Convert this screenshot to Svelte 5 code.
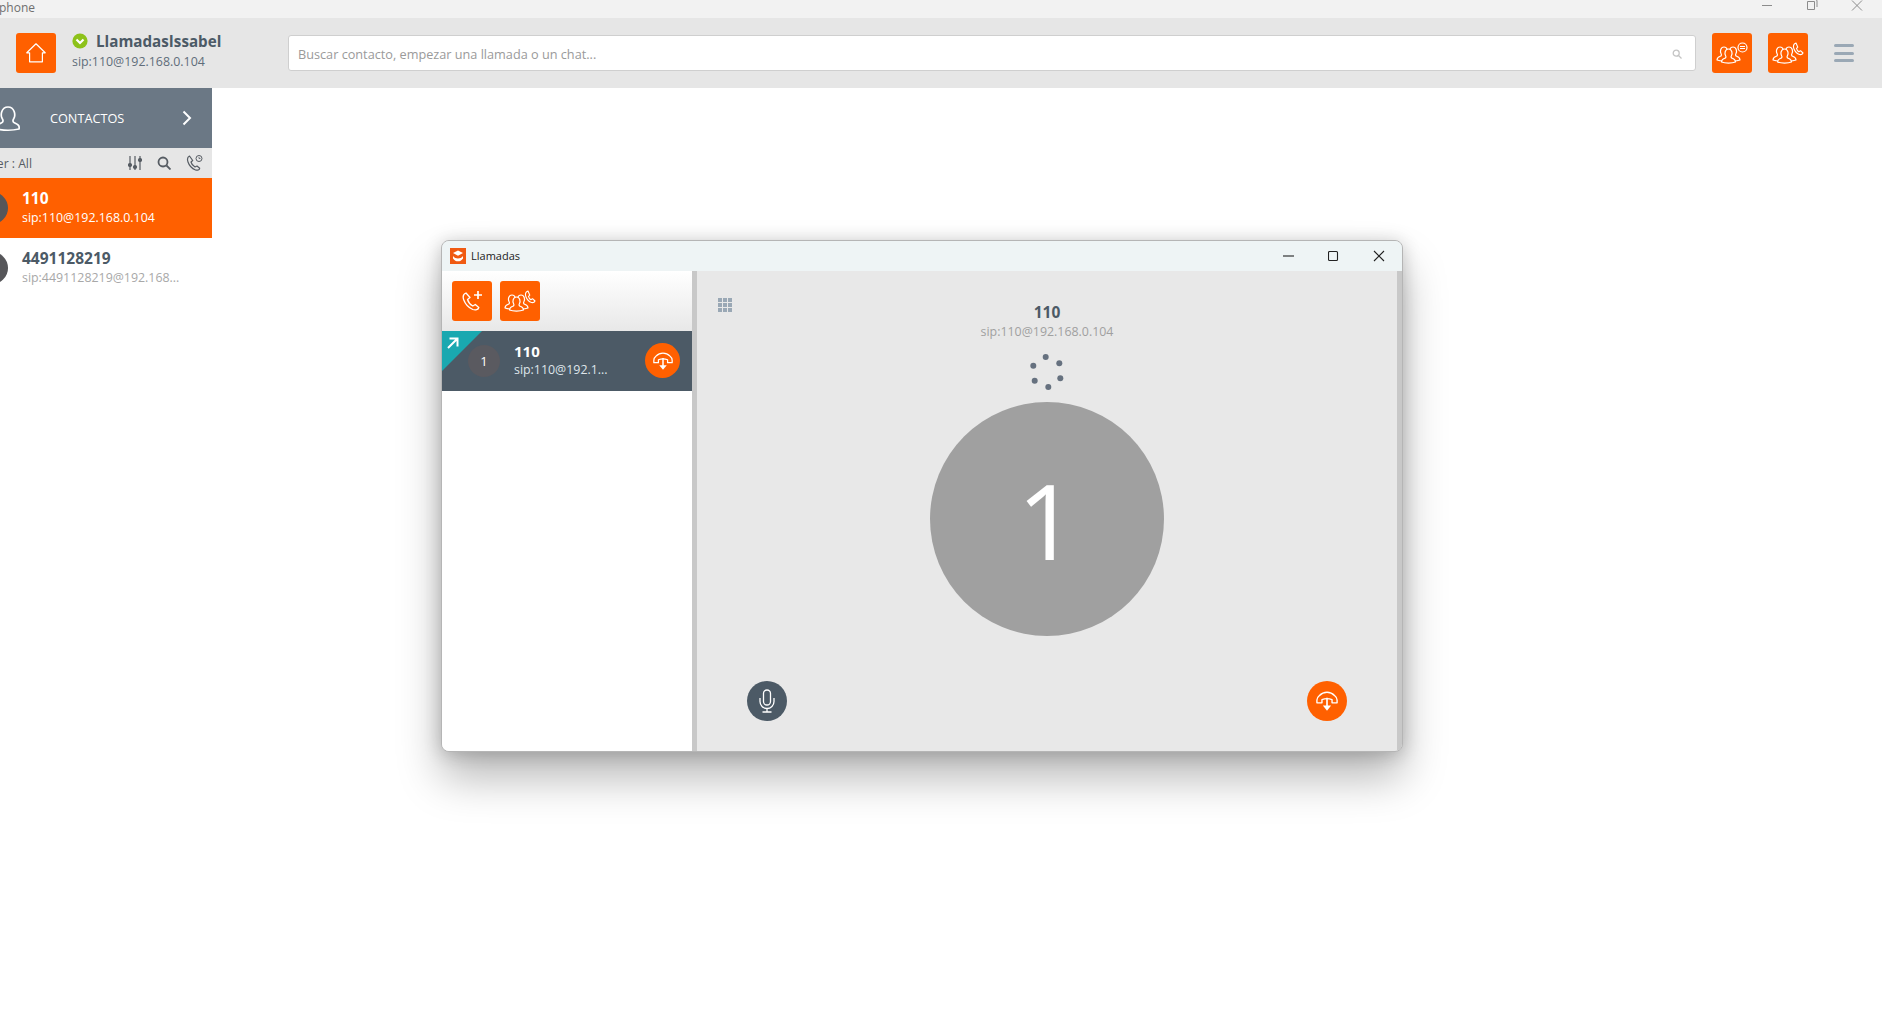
<script>
  const dots = [[8.7,3],[22.3,9.3],[23.3,24.3],[11.3,33],[-2.3,26.7],[-3.7,11.7]];
  const person = "M0 13c0-2.500 1.500-3 3.500-3.800 1-.4 1.200-1.500.6-2.500C2.800 4.500 3.500 0 7 0s4.200 4.500 2.900 6.700c-.6 1-.4 2.100.6 2.500 2 .8 3.500 1.300 3.500 3.800-3.500 1.400-10.500 1.400-14 0z";
</script>

{#snippet people()}
  <g fill="#ff6000" stroke="#fff" stroke-width="1.200" stroke-linejoin="round">
    <path d={person} transform="translate(5 14)"/>
    <path d={person} transform="translate(14 14)"/>
    <path d={person} transform="translate(9.500 16)"/>
  </g>
{/snippet}

{#snippet groupCall()}
  <svg width="40" height="40" viewBox="0 0 40 40">
    {@render people()}
    <path d="M28 10c-2.500 1-3 3.500-2 6s3 4.700 5.500 5.500c1.500.3 3-.3 3.500-1.500l-2.500-2.300-1.700 1c-1-.7-2-2-2.300-3.300l1.300-1.200z" fill="none" stroke="#fff" stroke-width="1.100" stroke-linejoin="round"/>
  </svg>
{/snippet}

{#snippet handset()}
  <g fill="none" stroke="#fff" stroke-width="1.500" stroke-linejoin="round">
    <path d="M1 11c0-2 .8-3.500 2.500-4.800 5-5 12-5 17 0 1.700 1.300 2.500 2.800 2.500 4.800v3h-5.500v-3.500c-3.500-1.400-7.500-1.400-11 0V14H1z"/>
    <path d="M12 8.500V19" stroke-width="1.800"/>
    <path d="M7.500 17l4.500 5.500 4.500-5.500z" fill="#fff" stroke="none"/>
  </g>
{/snippet}

<div class="app">
  <div class="os-bar">
    <span class="os-title">phone</span>
    <div class="os-controls">
      <svg width="12" height="12" viewBox="0 0 12 12"><path d="M1 5.500h10" stroke="#8c8c8c" fill="none"/></svg>
      <svg width="12" height="12" viewBox="0 0 12 12"><path d="M1.500 1.500h7v8h-7zM3.500-.5h6a1.500 1.500 0 0 1 1.500 1.500v6" stroke="#8c8c8c" fill="none"/></svg>
      <svg width="12" height="12" viewBox="0 0 12 12"><path d="M1 .5l10 10M11 .5l-10 10" stroke="#8c8c8c" fill="none"/></svg>
    </div>
  </div>

  <header class="top">
    <button class="tile home" aria-label="Inicio">
      <svg width="20" height="20" viewBox="0 0 20 20" fill="none" stroke="#fff" stroke-width="1.200"><path d="M10 .8L.8 9.800h2.800v9h12.800v-9h2.800z" stroke-linejoin="round"/></svg>
    </button>
    <div class="me">
      <div class="me-name">
        <svg width="16" height="16" viewBox="0 0 16 16"><circle cx="8" cy="8" r="7.600" fill="#8dc21a"/><path d="M4.500 6.500L8 10l3.500-3.500" stroke="#fff" stroke-width="2.200" fill="none"/></svg>
        <strong>LlamadasIssabel</strong>
      </div>
      <div class="me-sip">sip:110@192.168.0.104</div>
    </div>
    <div class="search">
      <span>Buscar contacto, empezar una llamada o un chat...</span>
      <svg width="10" height="10" viewBox="0 0 10 10" fill="none" stroke="#c4c4c4" stroke-width="1.300"><circle cx="4.200" cy="4.200" r="3"/><path d="M6.500 6.500L9.500 9.500"/></svg>
    </div>
    <button class="tile" aria-label="Chat de grupo">
      <svg width="40" height="40" viewBox="0 0 40 40">
        {@render people()}
        <circle cx="30.500" cy="14.500" r="4.500" fill="none" stroke="#fff" stroke-width="1.200"/>
        <path d="M28 13.500h5M28 15.500h5" stroke="#fff"/>
      </svg>
    </button>
    <button class="tile" aria-label="Llamada de grupo">{@render groupCall()}</button>
    <button class="menu" aria-label="Menú"><i></i><i></i><i></i></button>
  </header>

  <main class="body">
    <aside class="side">
      <div class="side-head">
        <svg class="contact" width="24" height="26" viewBox="0 0 24 26" fill="none" stroke="#fff" stroke-width="1.700"><path d="M1 24c-1-4 2-5 5-6.500 1.500-.8 1.200-2.500.2-4-1.900-3.200-1-11.500 5.800-11.500s7.700 8.300 5.800 11.500c-1 1.500-1.300 3.200.2 4 3 1.500 6 2.500 5 6.500-6 1.500-16 1.500-22 0z" stroke-linejoin="round"/></svg>
        <span class="side-title">CONTACTOS</span>
        <svg width="10" height="16" viewBox="0 0 10 16" fill="none" stroke="#fff" stroke-width="2"><path d="M1.500 1.500L8 8l-6.500 6.500"/></svg>
      </div>
      <div class="filter">
        <span class="filter-label">Filter : All</span>
        <svg width="14" height="14" viewBox="0 0 14 14" fill="#565c63" stroke="#565c63" stroke-width="1.200"><path d="M2 0v14M7 0v14M12 0v14" fill="none"/><circle cx="2" cy="9" r="1.500"/><circle cx="7" cy="11" r="1.500"/><circle cx="12" cy="4" r="1.500"/></svg>
        <svg width="14" height="14" viewBox="0 0 14 14" fill="none" stroke="#565c63" stroke-width="1.800"><circle cx="6" cy="6" r="4.500"/><path d="M9.500 9.500L13.500 13.500"/></svg>
        <svg width="17" height="16" viewBox="0 0 17 16" fill="none" stroke="#565c63" stroke-width="1.200"><path d="M3.500 1C1.500 2 1 4 2 7c1 3 4 6.500 7.500 8 2 .5 4 0 4.200-1.800L11 11l-2 1c-2-1-3.500-3-4-5l1.700-1.500z" stroke-linejoin="round"/><circle cx="13" cy="3.500" r="3" stroke-width="1"/><path d="M13 2v1.500h1.500" stroke-width=".8"/></svg>
      </div>
      <div class="contact-row active">
        <span class="c-avatar"></span>
        <div class="c-text"><strong>110</strong><span>sip:110@192.168.0.104</span></div>
      </div>
      <div class="contact-row">
        <span class="c-avatar"></span>
        <div class="c-text"><strong>4491128219</strong><span>sip:4491128219@192.168...</span></div>
      </div>
    </aside>
  </main>

  <section class="window">
    <div class="win-title">
      <svg class="logo" width="16" height="16" viewBox="0 0 16 16"><rect width="16" height="16" fill="#f05a12"/><path d="M8 2.500l5 2.500-5 2.700L3 5z" fill="#fff"/><path d="M3 8c1.500 1.800 3 2.500 5 2.500s3.500-.7 5-2.500v2.500c-1.500 2-3 2.800-5 2.800s-3.500-.8-5-2.800z" fill="#fff"/></svg>
      <span class="win-name">Llamadas</span>
      <div class="win-controls">
        <svg width="12" height="12" viewBox="0 0 12 12"><path d="M0 6h11" stroke="#222" fill="none" stroke-width="1.100"/></svg>
        <svg width="12" height="12" viewBox="0 0 12 12"><rect x=".5" y="1.500" width="9" height="9" rx="1" stroke="#222" fill="none" stroke-width="1.100"/></svg>
        <svg width="12" height="12" viewBox="0 0 12 12"><path d="M1 1l10 10M11 1L1 11" stroke="#222" fill="none" stroke-width="1.100"/></svg>
      </div>
    </div>
    <div class="win-body">
      <div class="calls">
        <div class="calls-tools">
          <button class="tile" aria-label="Nueva llamada">
            <svg width="22" height="22" viewBox="0 0 22 22" fill="none" stroke="#fff" stroke-width="1.300"><path d="M5 3C2.500 4 1.500 6.500 2.800 10c1.500 4 5 7.800 9 9.500 2.700 1 5.500.3 6-2l-3.500-3-2.500 1.500c-2.500-1.300-4.500-3.800-5.300-6.500L9 7.500z" stroke-linejoin="round"/><path d="M17 1v8M13 5h8" stroke-width="1.700"/></svg>
          </button>
          <button class="tile" aria-label="Llamada de grupo">{@render groupCall()}</button>
        </div>
        <div class="call-item">
          <span class="corner">
            <svg width="12" height="12" viewBox="0 0 12 12" fill="none" stroke="#fff" stroke-width="2"><path d="M1 11L10.500 1.500M2.500 1.500h8v8"/></svg>
          </span>
          <span class="call-avatar">1</span>
          <div class="call-text"><strong>110</strong><span>sip:110@192.1...</span></div>
          <button class="round orange small" aria-label="Colgar">
            <svg width="20" height="20" viewBox="0 0 24 24">{@render handset()}</svg>
          </button>
        </div>
      </div>
      <div class="stage">
        <div class="stage-top">
          <svg class="keypad" width="14" height="14" viewBox="0 0 14 14" fill="#9aa8b5">
            <rect width="4" height="4"/><rect x="5" width="4" height="4"/><rect x="10" width="4" height="4"/>
            <rect y="5" width="4" height="4"/><rect x="5" y="5" width="4" height="4"/><rect x="10" y="5" width="4" height="4"/>
            <rect y="10" width="4" height="4"/><rect x="5" y="10" width="4" height="4"/><rect x="10" y="10" width="4" height="4"/>
          </svg>
          <div class="peer">
            <strong>110</strong>
            <span>sip:110@192.168.0.104</span>
          </div>
        </div>
        <svg class="spinner" width="36" height="36" viewBox="-8 0 36 36" fill="#66717f">
          {#each dots as [x, y]}<circle cx={x} cy={y} r="3"/>{/each}
        </svg>
        <div class="big-avatar">1</div>
        <div class="stage-actions">
          <button class="round slate" aria-label="Micrófono">
            <svg width="18" height="26" viewBox="0 0 18 24" fill="none" stroke="#fff" stroke-width="1.300"><rect x="5.500" y="1" width="7" height="15" rx="3.500"/><path d="M2 9v3.500a7 7 0 0 0 14 0V9M9 19.500V23M4.500 23h9"/></svg>
          </button>
          <button class="round orange" aria-label="Colgar">
            <svg width="22" height="22" viewBox="0 0 24 24">{@render handset()}</svg>
          </button>
        </div>
      </div>
      <div class="rail"></div>
    </div>
  </section>
</div>

<style>
  :global(body) { margin: 0; background: #fff; font-family: "Open Sans", "Noto Sans", sans-serif; overflow: hidden; }
  button { border: 0; padding: 0; cursor: pointer; font: inherit; }
  svg { display: block; flex: none; }
  .app { position: relative; width: 1882px; height: 1027px; overflow: hidden; background: #fff; color: #4c5a66; }

  .os-bar { height: 18px; background: #f2f2f2; display: flex; justify-content: space-between; overflow: hidden; }
  .os-title { margin-left: -1px; font-size: 12px; line-height: 15px; color: #6f6f6f; }
  .os-controls { display: flex; gap: 33px; margin-right: 19px; }

  .top { height: 70px; background: #e6e6e6; display: flex; align-items: center; padding: 0 28px 0 16px; box-sizing: border-box; }
  .tile { width: 40px; height: 40px; background: #ff6000; border-radius: 3px; display: flex; align-items: center; justify-content: center; flex: none; }
  .me { margin-left: 16px; width: 200px; margin-top: -3px; }
  .me-name { display: flex; align-items: center; gap: 8px; height: 20px; }
  .me-name strong { font-size: 15.200px; line-height: 20px; color: #4c5a66; }
  .me-sip { font-size: 12.400px; line-height: 20px; color: #5f6d7a; margin-top: 1px; }
  .search { width: 1408px; height: 36px; margin-left: 16px; box-sizing: border-box; background: #fff; border: 1px solid #cfcfcf; border-radius: 3px; display: flex; align-items: center; justify-content: space-between; padding: 2px 13px 0 9px; font-size: 12.700px; color: #9a9a9a; }
  .search + .tile { margin-left: 16px; }
  .tile + .tile { margin-left: 16px; }
  .menu { width: 20px; height: 20px; margin-left: 26px; background: none; display: flex; flex-direction: column; justify-content: space-between; padding: 1px 0; box-sizing: border-box; }
  .menu i { display: block; height: 3px; border-radius: 2px; background: #9aa8b5; }

  .body { height: 939px; }
  .side { width: 212px; }
  .side-head { height: 60px; background: #6b7885; display: flex; align-items: center; color: #fff; padding-right: 20px; box-sizing: border-box; }
  .contact { margin-left: -4px; margin-top: -1px; }
  .side-title { flex: 1; margin-left: 30px; font-size: 12.700px; }
  .filter { height: 30px; background: #e6e6e6; display: flex; align-items: center; padding-right: 10px; box-sizing: border-box; font-size: 12.200px; color: #565c63; }
  .filter-label { margin-left: -20px; width: 148px; flex: none; }
  .filter svg + svg { margin-left: 15px; }
  .contact-row { height: 60px; display: flex; align-items: center; overflow: hidden; }
  .contact-row.active { background: #ff6000; color: #fff; }
  .c-avatar { width: 32px; height: 32px; border-radius: 50%; background: #565659; margin-left: -24px; flex: none; }
  .c-text { margin-left: 14px; display: flex; flex-direction: column; margin-top: -1px; }
  .c-text strong { font-size: 15.500px; line-height: 20px; }
  .c-text span { font-size: 12.400px; line-height: 20px; color: #a8a8a8; }
  .active .c-text span { color: #fff; }

  .window { position: absolute; left: 441px; top: 240px; width: 962px; height: 512px; box-sizing: border-box; border: 1px solid #b5b5b5; border-radius: 8px; overflow: hidden; display: flex; flex-direction: column; background: #e8e8e8; box-shadow: 0 26px 44px rgba(0,0,0,.28), 0 2px 18px rgba(0,0,0,.2); }
  .win-title { height: 30px; flex: none; background: #eef4f5; display: flex; align-items: center; padding: 0 17px 1px 8px; box-sizing: border-box; }
  .win-name { margin-left: 5px; font-size: 11px; color: #222; flex: 1; }
  .win-controls { display: flex; gap: 33px; }
  .win-body { flex: 1; display: flex; min-height: 0; }
  .calls { width: 250px; flex: none; background: #fff; border-right: 5px solid #c8c8c8; }
  .calls-tools { height: 60px; box-sizing: border-box; padding-left: 10px; display: flex; align-items: center; gap: 8px; background: linear-gradient(#fff, #e8e8e8); }
  .calls-tools .tile + .tile { margin-left: 0; }
  .call-item { position: relative; height: 60px; background: #4c5a66; display: flex; align-items: center; color: #fff; padding-left: 26px; }
  .corner { position: absolute; left: 0; top: 0; width: 40px; height: 40px; background: #1aa8b0; clip-path: polygon(0 0, 100% 0, 0 100%); }
  .corner svg { margin: 6px 0 0 5px; }
  .call-avatar { width: 32px; height: 32px; border-radius: 50%; background: #5a5a60; display: flex; align-items: center; justify-content: center; font-size: 13px; flex: none; }
  .call-text { margin: -2px 0 0 14px; width: 110px; display: flex; flex-direction: column; }
  .call-text strong { font-size: 15px; line-height: 20px; }
  .call-text span { font-size: 12.400px; line-height: 18px; color: #dfe5ea; }
  .round { border-radius: 50%; display: flex; align-items: center; justify-content: center; width: 40px; height: 40px; flex: none; }
  .round.small { width: 35px; height: 35px; margin: -1px 0 0 21px; }
  .orange { background: #ff6000; }
  .slate { background: #4c5a66; }

  .stage { flex: 1; min-width: 0; display: flex; flex-direction: column; align-items: center; }
  .stage-top { width: 100%; display: grid; grid-template-columns: 1fr auto 1fr; padding-top: 31px; }
  .keypad { margin: -4px 0 0 21px; }
  .peer { display: flex; flex-direction: column; align-items: center; }
  .peer strong { font-size: 15.500px; line-height: 20px; color: #4c5a66; }
  .peer span { font-size: 12.400px; line-height: 18px; color: #a0a0a0; margin-top: 1px; }
  .spinner { margin-top: 13px; }
  .big-avatar { width: 234px; height: 234px; margin-top: 12px; border-radius: 50%; background: #a0a0a0; color: #fff; font-size: 104px; font-weight: 400; display: flex; align-items: center; justify-content: center; }
  .stage-actions { width: 100%; box-sizing: border-box; display: flex; justify-content: space-between; margin-top: 45px; padding: 0 50px; }
  .rail { width: 5px; background: #c8c8c8; flex: none; }
</style>
